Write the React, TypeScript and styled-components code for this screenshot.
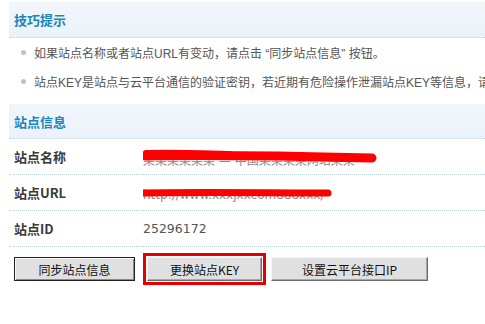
import React from "react";
import styled, { createGlobalStyle } from "styled-components";

const Global = createGlobalStyle`
  html, body { margin: 0; padding: 0; background: #fff; }
  body { font-family: "Liberation Sans", "Noto Sans CJK SC", sans-serif; }
`;

const Page = styled.div`
  width: 485px;
  height: 324px;
  overflow: hidden;
  padding: 2px 0 0 9px;
  box-sizing: border-box;
`;

const SectionHeader = styled.div<{ $h: number }>`
  height: ${(p) => p.$h}px;
  box-sizing: border-box;
  display: flex;
  align-items: center;
  padding-left: 5px;
  background: linear-gradient(to bottom, #f1f6fb, #eaf2f9);
  border-bottom: 1px dotted #c3d3df;
`;

const Title = styled.h3`
  margin: 0;
  font-family: "Noto Sans CJK SC", sans-serif;
  font-size: 13px;
  font-weight: 700;
  color: #1a86bd;
  line-height: 1;
`;

const Tips = styled.ul`
  list-style: none;
  margin: 0;
  padding: 0 0 8px 12px;
  overflow: hidden;
`;

const Tip = styled.li`
  display: flex;
  align-items: center;
  height: 29px;
  white-space: nowrap;
  font-size: 12px;
  color: #555;
  &::before {
    content: "";
    flex: none;
    width: 5px;
    height: 5px;
    border-radius: 50%;
    background: #c2c2c2;
    margin-right: 8px;
  }
`;

const InfoTable = styled.div`
  display: grid;
  grid-template-columns: 134px 1fr;
`;

const Row = styled.div`
  display: contents;
`;

const Label = styled.div`
  height: 36px;
  box-sizing: border-box;
  display: flex;
  align-items: center;
  padding-left: 5px;
  font-family: "Noto Sans CJK SC", sans-serif;
  font-size: 13px;
  font-weight: 700;
  color: #3a3a3a;
  border-bottom: 1px dotted #bcd4e2;
`;

const Value = styled.div`
  position: relative;
  height: 36px;
  box-sizing: border-box;
  display: flex;
  align-items: center;
  font-family: "DejaVu Sans", "Noto Sans CJK SC", sans-serif;
  font-size: 12.5px;
  color: #555;
  border-bottom: 1px dotted #bcd4e2;
  white-space: nowrap;
  overflow: hidden;
`;

const Hidden = styled.span`
  font-size: 12px;
  color: #888;
  padding-top: 5px;
`;

const Scribble = styled.svg`
  position: absolute;
  left: -3px;
  top: 0;
  pointer-events: none;
`;

const Buttons = styled.div`
  display: flex;
  align-items: center;
  padding: 6px 0 0 5px;
`;

const Btn = styled.button<{ $w: number; $default?: boolean }>`
  width: ${(p) => p.$w}px;
  height: 24px;
  padding: 0;
  font-family: "Noto Sans CJK SC", sans-serif;
  font-size: 12px;
  color: #111;
  background: #e0e0e0;
  border: 1px solid;
  border-color: ${(p) => (p.$default ? "#222" : "#f4f4f4 #6a6a6a #6a6a6a #f4f4f4")};
  box-shadow: ${(p) =>
    p.$default
      ? "inset 1px 1px #fafafa, inset -1px -1px #8a8a8a"
      : "inset -1px -1px #a8a8a8"};
  cursor: pointer;
`;

const Highlight = styled.div`
  display: inline-flex;
  padding: 1px;
  border: 3px solid #e30000;
  margin: 0 5px 0 8px;
`;

export default function App() {
  return (
    <Page>
      <Global />
      <SectionHeader $h={36}>
        <Title>技巧提示</Title>
      </SectionHeader>
      <Tips>
        <Tip>如果站点名称或者站点URL有变动，请点击 “同步站点信息” 按钮。</Tip>
        <Tip>站点KEY是站点与云平台通信的验证密钥，若近期有危险操作泄漏站点KEY等信息，请</Tip>
      </Tips>
      <SectionHeader $h={35}>
        <Title>站点信息</Title>
      </SectionHeader>
      <InfoTable>
        <Row>
          <Label>站点名称</Label>
          <Value>
            <Hidden>某某某某某某 — 中国某某某某网站某某</Hidden>
            <Scribble width="250" height="36" viewBox="0 0 250 36">
              <path d="M5 17 C60 16, 150 17, 232 19" stroke="#ff0000" strokeWidth="9" strokeLinecap="round" fill="none" />
              <path d="M6 14 C30 13, 60 14, 90 15" stroke="#ff0000" strokeWidth="6" strokeLinecap="round" fill="none" />
              <path d="M205 15 L236 18 L232 23 L195 22 Z" fill="#ff0000" />
            </Scribble>
          </Value>
        </Row>
        <Row>
          <Label>站点URL</Label>
          <Value>
            <Hidden>http://www.xxxjxxcom888xxx/</Hidden>
            <Scribble width="250" height="36" viewBox="0 0 250 36">
              <path d="M4 18 C60 17, 130 18, 188 18" stroke="#ff0000" strokeWidth="7" strokeLinecap="round" fill="none" />
            </Scribble>
          </Value>
        </Row>
        <Row>
          <Label>站点ID</Label>
          <Value>25296172</Value>
        </Row>
      </InfoTable>
      <Buttons>
        <Btn $w={121} $default>同步站点信息</Btn>
        <Highlight>
          <Btn $w={115}>更换站点KEY</Btn>
        </Highlight>
        <Btn $w={157}>设置云平台接口IP</Btn>
      </Buttons>
    </Page>
  );
}
